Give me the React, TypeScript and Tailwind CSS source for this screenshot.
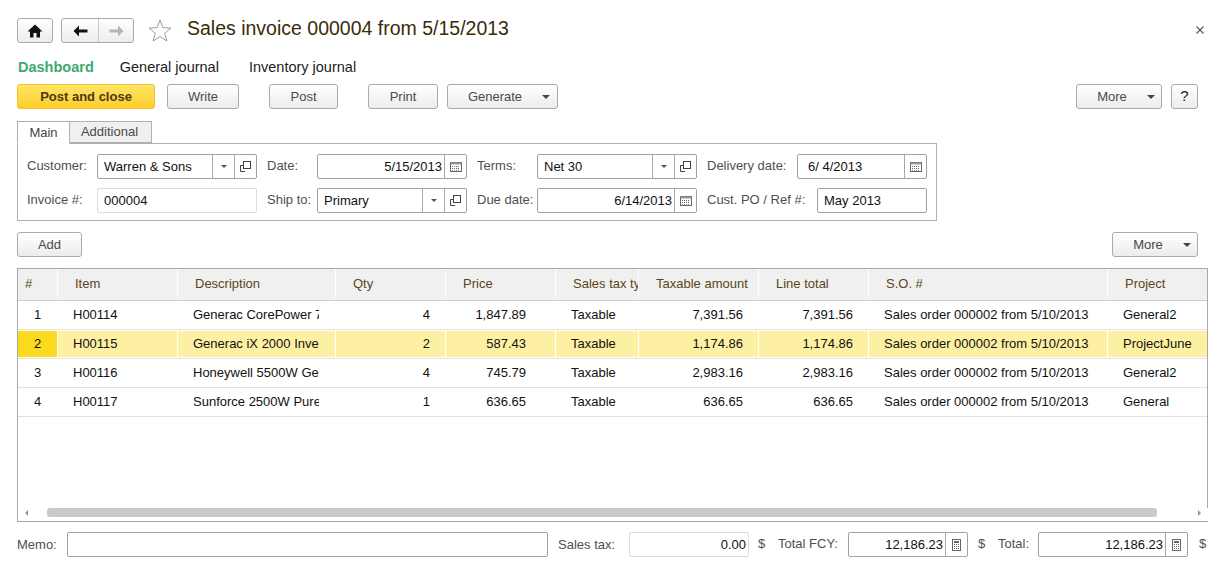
import React from "react";

const Open = () => (
  <svg width="11" height="11" viewBox="0 0 11 11" fill="none" stroke="#444" strokeWidth="1">
    <rect x="3.5" y="0.5" width="7" height="7" />
    <path d="M3 4.5H0.5V10.5H5" />
  </svg>
);
const Cal = () => (
  <svg width="12" height="10" viewBox="0 0 12 10" fill="none">
    <rect x="0.5" y="0.5" width="11" height="9" fill="#fff" stroke="#666" />
    <rect x="0.5" y="0.5" width="11" height="2" fill="#999" />
    <path d="M2 4.5h8M2 6.5h8" stroke="#666" strokeDasharray="1 1" />
    <path d="M2 8.5h8" stroke="#999" strokeDasharray="1 1" />
  </svg>
);
const Calc = () => (
  <svg width="9" height="12" viewBox="0 0 9 12" fill="none">
    <rect x="0.5" y="0.5" width="8" height="11" fill="#fff" stroke="#666" />
    <rect x="2" y="2" width="5" height="2" fill="#666" />
    <path d="M2 5.5h5M2 7.5h5M2 9.5h5" stroke="#666" strokeDasharray="1 1" />
  </svg>
);
const Caret = ({ c = "#444" }: { c?: string }) => (
  <svg width="8" height="4" viewBox="0 0 8 4"><path d="M0 0h8L4 4z" fill={c} /></svg>
);
const SmallCaret = () => (
  <svg width="6" height="3" viewBox="0 0 6 3"><path d="M0 0h6L3 3z" fill="#555" /></svg>
);

const btn =
  "h-[25px] flex items-center justify-center rounded-[3px] border border-[#aaaaaa] bg-linear-to-b from-white to-[#ececec] text-[13px] text-[#4a4a4a] shrink-0";

const Btn = ({ w, ml, children }: { w: string; ml: string; children: React.ReactNode }) => (
  <div className={`${btn} ${w} ${ml}`}>{children}</div>
);

const Label = ({ w, lead = "leading-[24px]", children }: { w: string; lead?: string; children: React.ReactNode }) => (
  <div className={`${w} ${lead} shrink-0 text-[13px] text-[#4f4f4f] h-[25px] whitespace-nowrap`}>{children}</div>
);

const Sep = ({ w, children }: { w: string; children: React.ReactNode }) => (
  <div className={`${w} h-full border-l border-[#a8a8a8] flex items-center justify-center shrink-0`}>{children}</div>
);

const Field = ({
  w,
  v,
  right,
  light,
  pl,
  children,
}: {
  w: string;
  v?: string;
  right?: boolean;
  light?: boolean;
  pl?: string;
  children?: React.ReactNode;
}) => (
  <div className={`${w} h-[25px] shrink-0 flex rounded-[2px] border bg-white text-[13px] text-[#111] ${light ? "border-[#dcdcdc]" : "border-[#a0a0a0]"}`}>
    <div className={`flex-1 min-w-0 flex items-center whitespace-nowrap ${right ? "justify-end pr-[2px]" : pl ?? "pl-[6px]"}`}>{v}</div>
    {children}
  </div>
);

const rows = [
  ["1", "H00114", "Generac CorePower 7kW Home", "4", "1,847.89", "Taxable", "7,391.56", "7,391.56", "Sales order 000002 from 5/10/2013", "General2"],
  ["2", "H00115", "Generac iX 2000 Inverter Gen", "2", "587.43", "Taxable", "1,174.86", "1,174.86", "Sales order 000002 from 5/10/2013", "ProjectJune"],
  ["3", "H00116", "Honeywell 5500W Generator", "4", "745.79", "Taxable", "2,983.16", "2,983.16", "Sales order 000002 from 5/10/2013", "General2"],
  ["4", "H00117", "Sunforce 2500W Pure Sine", "1", "636.65", "Taxable", "636.65", "636.65", "Sales order 000002 from 5/10/2013", "General"],
];

const cols = [
  "w-[40px] justify-center border-r border-white",
  "w-[120px] pl-[15px] border-r border-white",
  "w-[158px] pl-[15px] pr-[15px] border-r border-white",
  "w-[110px] justify-end pr-[15px] border-r border-white",
  "w-[110px] justify-end pr-[29px] border-r border-white",
  "w-[83px] pl-[15px] border-r border-white",
  "w-[120px] justify-end pr-[15px] border-r border-white",
  "w-[110px] justify-end pr-[15px] border-r border-white",
  "w-[239px] pl-[15px] border-r border-white",
  "w-[99px] pl-[15px]",
];

const heads: [string, string][] = [
  ["#", "w-[40px] pl-[7px] border-r border-white"],
  ["Item", "w-[120px] pl-[17px] border-r border-white"],
  ["Description", "w-[158px] pl-[17px] border-r border-white"],
  ["Qty", "w-[110px] pl-[17px] border-r border-white"],
  ["Price", "w-[110px] pl-[17px] border-r border-white"],
  ["Sales tax type", "w-[83px] pl-[17px] border-r border-white"],
  ["Taxable amount", "w-[120px] pl-[17px] border-r border-white"],
  ["Line total", "w-[110px] pl-[17px] border-r border-white"],
  ["S.O. #", "w-[239px] pl-[17px] border-r border-white"],
  ["Project", "w-[99px] pl-[17px]"],
];

export default function App() {
  return (
    <div className="w-[1230px] h-[567px] bg-white overflow-hidden pl-[17px] pr-[22px] pt-[18px] font-['Liberation_Sans',Arial,sans-serif]">
      {/* Top bar */}
      <div className="flex items-center h-[25px]">
        <div className={`${btn} w-[36px]`}>
          <svg width="16" height="14" viewBox="0 0 16 14"><path d="M8 0.5 15.5 7.5H13V13.5H9.5V9H6.5V13.5H3V7.5H0.5Z" fill="#111" /></svg>
        </div>
        <div className={`${btn} w-[73px] ml-[8px]`}>
          <div className="w-[37px] h-full flex items-center justify-center border-r border-[#c8c8c8]">
            <svg width="15" height="12" viewBox="0 0 15 12"><path d="M6 0.5V4.5H14.5V7.5H6V11.5L0.5 6Z" fill="#111" /></svg>
          </div>
          <div className="flex-1 h-full flex items-center justify-center">
            <svg width="15" height="12" viewBox="0 0 15 12"><path d="M9 0.5V4.5H0.5V7.5H9V11.5L14.5 6Z" fill="#b5b5b5" /></svg>
          </div>
        </div>
        <svg className="ml-[14px]" width="24" height="23" viewBox="0 0 24 23">
          <path d="M12 1 14.9 8.6 23 9.1 16.7 14.2 18.9 22 12 17.6 5.1 22 7.3 14.2 1 9.1 9.1 8.6Z" fill="#fff" stroke="#9a9a9a" />
        </svg>
        <div className="ml-[15px] mb-[3px] text-[19.5px] text-[#3a2c08] whitespace-nowrap">Sales invoice 000004 from 5/15/2013</div>
        <svg className="ml-auto mr-[4px] mb-[2px]" width="8" height="8" viewBox="0 0 8 8"><path d="M0.5 0.5 7.5 7.5M7.5 0.5 0.5 7.5" stroke="#555" strokeWidth="1.1" /></svg>
      </div>

      {/* Command tabs */}
      <div className="flex items-center h-[18px] mt-[16px] text-[14.5px] text-[#222] whitespace-nowrap">
        <div className="ml-px font-bold text-[#3eaa6d]">Dashboard</div>
        <div className="ml-[26px]">General journal</div>
        <div className="ml-[30px]">Inventory journal</div>
      </div>

      {/* Toolbar */}
      <div className="flex items-center h-[25px] mt-[7px] pr-[10px]">
        <div className="w-[138px] h-[25px] shrink-0 flex items-center justify-center rounded-[3px] border border-[#f0c430] bg-linear-to-b from-[#ffe565] to-[#fdcd25] text-[13px] font-bold text-[#4a3a10]">Post and close</div>
        <Btn w="w-[72px]" ml="ml-[12px]">Write</Btn>
        <Btn w="w-[69px]" ml="ml-[30px]">Post</Btn>
        <Btn w="w-[70px]" ml="ml-[30px]">Print</Btn>
        <Btn w="w-[111px]" ml="ml-[9px]">
          <span className="ml-[13px]">Generate</span>
          <span className="ml-[20px]"><Caret /></span>
        </Btn>
        <div className="ml-auto flex items-center">
          <Btn w="w-[86px]" ml="ml-0">
            <span className="ml-[14px]">More</span>
            <span className="ml-[20px]"><Caret /></span>
          </Btn>
          <Btn w="w-[27px]" ml="ml-[9px]"><span className="text-[#222] text-[15px]">?</span></Btn>
        </div>
      </div>

      {/* Tabs */}
      <div className="flex mt-[12px] h-[23px] -mb-px relative z-10 text-[13px]">
        <div className="w-[53px] h-[23px] border border-[#b0b0b0] border-b-white bg-white flex items-center justify-center text-[#444]">Main</div>
        <div className="w-[82px] h-[22px] border border-l-0 border-[#b0b0b0] bg-[#f0f0f0] flex items-center justify-center text-[#4a4a4a] pr-[2px]">Additional</div>
      </div>

      {/* Form panel */}
      <div className="w-[920px] h-[78px] border border-[#b0b0b0] pl-[9px] pt-[10px] flex flex-col gap-[9px]">
        <div className="flex items-start">
          <Label w="w-[70px]">Customer:</Label>
          <Field w="w-[160px]" v="Warren & Sons">
            <Sep w="w-[22px]"><SmallCaret /></Sep>
            <Sep w="w-[22px]"><Open /></Sep>
          </Field>
          <div className="w-[10px] shrink-0" />
          <Label w="w-[50px]">Date:</Label>
          <Field w="w-[150px]" v="5/15/2013" right>
            <Sep w="w-[22px]"><Cal /></Sep>
          </Field>
          <div className="w-[10px] shrink-0" />
          <Label w="w-[60px]">Terms:</Label>
          <Field w="w-[160px]" v="Net 30">
            <Sep w="w-[22px]"><SmallCaret /></Sep>
            <Sep w="w-[22px]"><Open /></Sep>
          </Field>
          <div className="w-[10px] shrink-0" />
          <Label w="w-[90px]">Delivery date:</Label>
          <Field w="w-[130px]" v="6/ 4/2013" pl="pl-[10px]">
            <Sep w="w-[22px]"><Cal /></Sep>
          </Field>
        </div>
        <div className="flex items-start">
          <Label w="w-[70px]">Invoice #:</Label>
          <Field w="w-[160px]" v="000004" light />
          <div className="w-[10px] shrink-0" />
          <Label w="w-[50px]">Ship to:</Label>
          <Field w="w-[150px]" v="Primary">
            <Sep w="w-[22px]"><SmallCaret /></Sep>
            <Sep w="w-[22px]"><Open /></Sep>
          </Field>
          <div className="w-[10px] shrink-0" />
          <Label w="w-[60px]">Due date:</Label>
          <Field w="w-[160px]" v="6/14/2013" right>
            <Sep w="w-[22px]"><Cal /></Sep>
          </Field>
          <div className="w-[10px] shrink-0" />
          <Label w="w-[110px]">Cust. PO / Ref #:</Label>
          <Field w="w-[110px]" v="May 2013" />
        </div>
      </div>

      {/* Add row */}
      <div className="flex items-center justify-between mt-[11px] pr-[10px]">
        <Btn w="w-[65px]" ml="ml-0">Add</Btn>
        <Btn w="w-[86px]" ml="ml-0">
          <span className="ml-[14px]">More</span>
          <span className="ml-[20px]"><Caret /></span>
        </Btn>
      </div>

      {/* Table */}
      <div className="mt-[11px] h-[254px] border-l border-b border-[#a8a8a8] flex flex-col">
        <div className="flex-1 min-h-0 border-t border-r border-[#a8a8a8] overflow-hidden">
          <div className="flex h-[32px] bg-[#f0f0f0] border-b border-[#cfcfcf]">
            {heads.map(([h, c]) => (
              <div key={h} className={`${c} h-[29px] shrink-0 flex items-center overflow-hidden whitespace-nowrap text-[13px] text-[#5a4516]`}>
                {h}
              </div>
            ))}
          </div>
          {rows.map((r, i) => (
            <div key={i} className="flex h-[29px] border-b border-[#e2e2e2]">
              {r.map((t, j) => (
                <div
                  key={j}
                  className={`${cols[j]} ${i === 1 ? "mt-px h-[26px]" : "h-[28px]"} ${i === 1 ? (j === 0 ? "bg-[#fbd91e]" : "bg-[#fdf0a2]") : ""} shrink-0 flex items-center overflow-hidden whitespace-nowrap text-[13px] text-[#111]`}
                >
                  <span className={j === 2 ? "block overflow-hidden w-[126px]" : ""}>{t}</span>
                </div>
              ))}
            </div>
          ))}
        </div>
        <div className="h-[13px] flex items-start shrink-0 pr-px">
          <div className="w-[29px] h-[9px] flex items-center pl-[7px]">
            <svg width="3" height="6" viewBox="0 0 3 6"><path d="M3 0V6L0 3z" fill="#999" /></svg>
          </div>
          <div className="w-[1110px] h-[9px] rounded-[3px] bg-[#cacaca]" />
          <div className="flex-1 h-[9px] flex items-center justify-end pr-[6px]">
            <svg width="3" height="6" viewBox="0 0 3 6"><path d="M0 0V6L3 3z" fill="#999" /></svg>
          </div>
        </div>
      </div>

      {/* Footer */}
      <div className="flex items-start mt-[10px]">
        <Label w="w-[50px]" lead="leading-[25px]">Memo:</Label>
        <Field w="w-[481px]" />
        <div className="w-[10px] shrink-0" />
        <Label w="w-[71px]" lead="leading-[25px]">Sales tax:</Label>
        <Field w="w-[120px]" v="0.00" right light />
        <Label w="w-[29px]" lead="leading-[23px]"><span className="ml-[9px]">$</span></Label>
        <Label w="w-[70px]" lead="leading-[23px]">Total FCY:</Label>
        <Field w="w-[120px]" v="12,186.23" right>
          <Sep w="w-[22px]"><Calc /></Sep>
        </Field>
        <Label w="w-[30px]" lead="leading-[23px]"><span className="ml-[10px]">$</span></Label>
        <Label w="w-[40px]" lead="leading-[23px]">Total:</Label>
        <Field w="w-[150px]" v="12,186.23" right>
          <Sep w="w-[22px]"><Calc /></Sep>
        </Field>
        <Label w="w-[20px]" lead="leading-[23px]"><span className="ml-[11px]">$</span></Label>
      </div>
    </div>
  );
}
